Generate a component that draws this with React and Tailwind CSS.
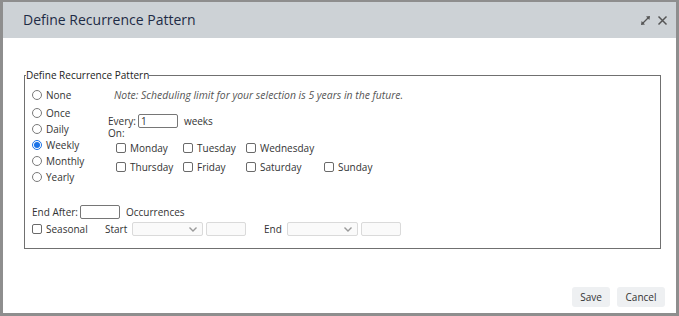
import React from "react";

const F = { fontFamily: '"Open Sans", "Noto Sans", sans-serif' };

function Radio({ checked, label }) {
  return (
    <div className="flex items-center h-[16px]">
      {checked ? (
        <span className="w-[10px] h-[10px] rounded-full border border-[#1a73e8] bg-white flex items-center justify-center">
          <span className="w-[6px] h-[6px] rounded-full bg-[#1a73e8]" />
        </span>
      ) : (
        <span className="w-[10px] h-[10px] rounded-full border border-[#7a7a7a] bg-white" />
      )}
      <span className="ml-[4px] text-[10px] leading-[16px] text-[#333]">{label}</span>
    </div>
  );
}

function Check({ label, w }) {
  return (
    <div className={`flex items-center h-[16px] ${w || ""}`}>
      <span className="w-[10px] h-[10px] rounded-[2px] border border-[#6a6a6a] bg-white" />
      <span className="ml-[4px] text-[10px] leading-[16px] text-[#333]">{label}</span>
    </div>
  );
}

function Select({ w }) {
  return (
    <div className={`h-[14px] ${w} border border-[#dadada] bg-[#fafafa] rounded-[2px] flex items-center justify-end pr-[5px]`}>
      <svg width="8" height="5" viewBox="0 0 8 5">
        <path d="M0.5 0.5 L4 4 L7.5 0.5" fill="none" stroke="#9a9a9a" strokeWidth="1.4" />
      </svg>
    </div>
  );
}

export default function App() {
  return (
    <div style={F} className="w-[679px] h-[316px] bg-[#8e8e8e] pt-[2px] pl-[3px] pr-[3px] pb-[3px] box-border overflow-hidden">
      <div className="h-full bg-white flex flex-col">
        <div className="h-[36px] bg-[#cdd2d6] flex items-center justify-between pl-[20px] pr-[8px] shrink-0">
          <span className="text-[14px] text-[#1e2b45] leading-none">Define Recurrence Pattern</span>
          <div className="flex items-center gap-[6px]">
            <svg width="11" height="11" viewBox="0 0 11 11">
              <path d="M2.5 8.5 L8.5 2.5" stroke="#555" strokeWidth="1.3" />
              <path d="M10 1 L6 1.6 L9.4 5 Z" fill="#555" />
              <path d="M1 10 L1.6 6 L5 9.4 Z" fill="#555" />
            </svg>
            <svg width="11" height="11" viewBox="0 0 11 11">
              <path d="M1.5 1.5 L9.5 9.5 M9.5 1.5 L1.5 9.5" stroke="#555" strokeWidth="1.5" />
            </svg>
          </div>
        </div>
        <div className="flex-1 flex flex-col">
          <fieldset className="mt-[30px] ml-[21px] mr-[15px] border border-[#707070] pl-[7px] pr-[7px] pb-[12px] pt-[4px]">
            <legend className="text-[10px] leading-[15px] text-[#222] ml-[-6px] px-0">Define Recurrence Pattern</legend>
            <div className="flex items-center">
              <div className="w-[82px]"><Radio label="None" /></div>
              <span className="italic text-[10.4px] text-[#555] leading-[16px]">Note: Scheduling limit for your selection is 5 years in the future.</span>
            </div>
            <div className="flex mt-[2px]">
              <div className="w-[76px] flex flex-col">
                <Radio label="Once" />
                <Radio label="Daily" />
                <Radio checked label="Weekly" />
                <Radio label="Monthly" />
                <Radio label="Yearly" />
              </div>
              <div className="flex flex-col pt-[9px]">
                <div className="flex items-center h-[14px] text-[10px] text-[#333]">
                  <span>Every:</span>
                  <div className="ml-[2px] w-[40px] h-[14px] border border-[#767676] rounded-[2px] text-[10px] leading-[12px] pl-[2px]">1</div>
                  <span className="ml-[6px]">weeks</span>
                </div>
                <div className="h-[12px] leading-[12px] text-[10px] text-[#333] mt-[-1px]">On:</div>
                <div className="flex pl-[8px] mt-[1px]">
                  <Check label="Monday" w="w-[67px]" />
                  <Check label="Tuesday" w="w-[63px]" />
                  <Check label="Wednesday" />
                </div>
                <div className="flex pl-[8px] mt-[3px]">
                  <Check label="Thursday" w="w-[67px]" />
                  <Check label="Friday" w="w-[63px]" />
                  <Check label="Saturday" w="w-[78px]" />
                  <Check label="Sunday" />
                </div>
              </div>
            </div>
            <div className="flex items-center h-[14px] mt-[20px] text-[10px] text-[#333]">
              <span>End After:</span>
              <div className="ml-[2px] w-[40px] h-[14px] border border-[#767676] rounded-[2px]" />
              <span className="ml-[6px]">Occurrences</span>
            </div>
            <div className="flex items-center h-[14px] mt-[3px] text-[10px] text-[#333]">
              <div className="w-[73px]"><Check label="Seasonal" /></div>
              <span className="w-[27px]">Start</span>
              <Select w="w-[71px]" />
              <div className="ml-[3px] w-[40px] h-[14px] border border-[#dadada] bg-[#fafafa] rounded-[2px]" />
              <span className="ml-[18px] w-[23px]">End</span>
              <Select w="w-[71px]" />
              <div className="ml-[3px] w-[40px] h-[14px] border border-[#dadada] bg-[#fafafa] rounded-[2px]" />
            </div>
          </fieldset>
          <div className="mt-auto flex justify-end gap-[7px] pr-[11px] pb-[6px]">
            <button className="h-[20px] w-[38px] bg-[#eef0f2] rounded-[3px] text-[10px] text-[#333]">Save</button>
            <button className="h-[20px] w-[48px] bg-[#eef0f2] rounded-[3px] text-[10px] text-[#333]">Cancel</button>
          </div>
        </div>
      </div>
    </div>
  );
}
